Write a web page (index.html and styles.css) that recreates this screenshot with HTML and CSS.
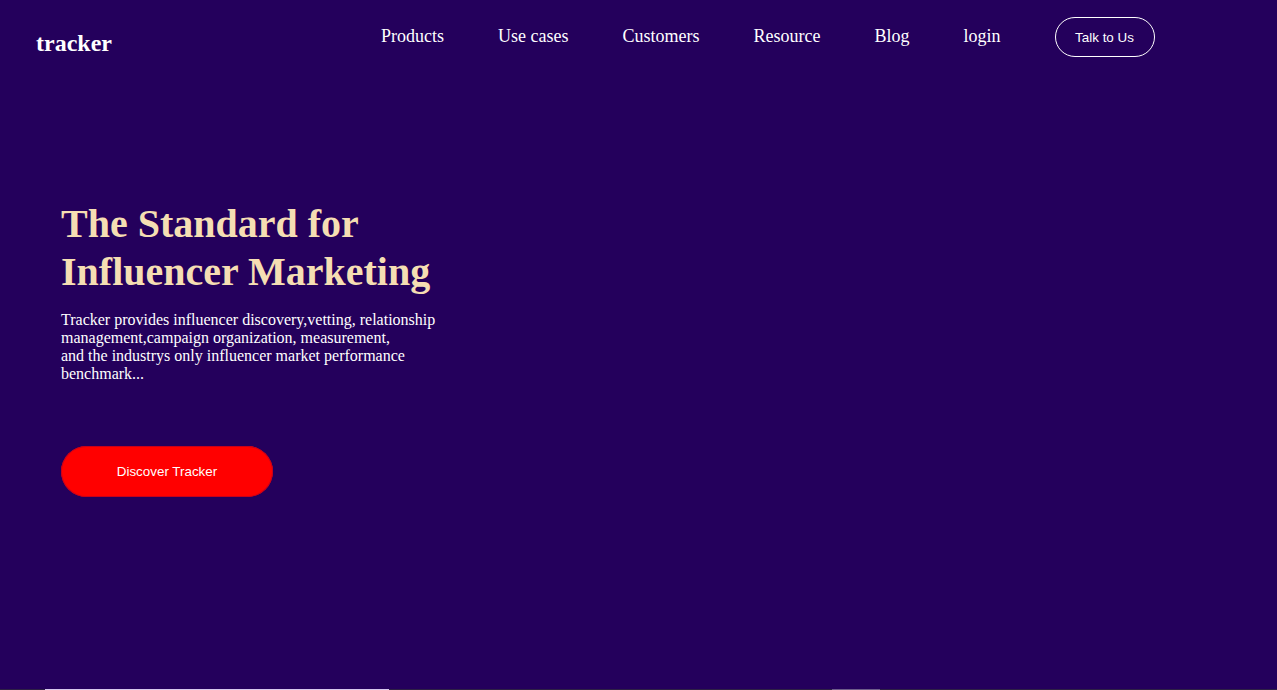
FILE: index.html
```html
<!DOCTYPE html>
<html lang="en">
<head>
<meta charset="utf-8">
<title>tracker</title>
<link rel="stylesheet" href="styles.css">
</head>
<body>
<div class="page">
  <header class="header">
    <div class="logo">tracker</div>
    <nav class="nav">
      <a class="nav-link" href="#">Products</a>
      <a class="nav-link" href="#">Use cases</a>
      <a class="nav-link" href="#">Customers</a>
      <a class="nav-link" href="#">Resource</a>
      <a class="nav-link" href="#">Blog</a>
      <a class="nav-link" href="#">login</a>
      <a class="talk-btn" href="#">Talk to Us</a>
    </nav>
  </header>
  <section class="hero">
    <h1 class="hero-title">The Standard for<br>Influencer Marketing</h1>
    <p class="hero-text">Tracker provides influencer discovery,vetting, relationship management,campaign organization, measurement,<br>and the industrys only influencer market performance benchmark...</p>
    <a class="discover-btn" href="#">Discover Tracker</a>
  </section>
  <div class="next-strip">
    <span class="strip-a"></span>
    <span class="strip-b"></span>
  </div>
</div>
</body>
</html>
```
FILE: styles.css
```css
html, body {
  margin: 0;
  padding: 0;
  background: #24005c;
  overflow: hidden;
}
.page {
  height: 690px;
  display: flex;
  flex-direction: column;
  font-family: "Liberation Serif", "Times New Roman", serif;
}
.header {
  display: flex;
  align-items: flex-start;
  height: 90px;
  padding: 17px 0 0 36px;
  box-sizing: border-box;
}
.logo {
  color: #fff;
  font-weight: bold;
  font-size: 24px;
  margin-top: 13px;
  width: 345px;
}
.nav {
  display: flex;
  align-items: center;
  gap: 54px;
  height: 40px;
}
.nav-link {
  color: #fff;
  text-decoration: none;
  font-size: 18px;
  position: relative;
  top: -1px;
}
.talk-btn {
  display: flex;
  align-items: center;
  justify-content: center;
  width: 100px;
  height: 40px;
  box-sizing: border-box;
  border: 1px solid #fff;
  border-radius: 20px;
  color: #fff;
  text-decoration: none;
  font-family: "Liberation Sans", Arial, sans-serif;
  font-size: 13.4px;
}
.hero {
  flex: 1;
  padding: 110px 0 0 61px;
  box-sizing: border-box;
}
.hero-title {
  margin: 0;
  color: #f5deb3;
  font-size: 40px;
  line-height: 48px;
  font-weight: bold;
}
.hero-text {
  margin: 15px 0 0 0;
  width: 380px;
  color: #fff;
  font-size: 16px;
  line-height: 18px;
}
.discover-btn {
  display: flex;
  align-items: center;
  justify-content: center;
  margin-top: 63px;
  width: 212px;
  height: 51px;
  box-sizing: border-box;
  border-radius: 26px;
  background: #ff0000;
  box-shadow: inset 0 0 0 1px #c8001a;
  color: #fff;
  text-decoration: none;
  font-family: "Liberation Sans", Arial, sans-serif;
  font-size: 13.4px;
}
.next-strip {
  height: 1px;
  background: #2e2145;
  display: flex;
}
.strip-a {
  margin-left: 45px;
  width: 344px;
  background: #d8c8ee;
}
.strip-b {
  margin-left: 443px;
  width: 48px;
  background: #6e5d8a;
}
```
